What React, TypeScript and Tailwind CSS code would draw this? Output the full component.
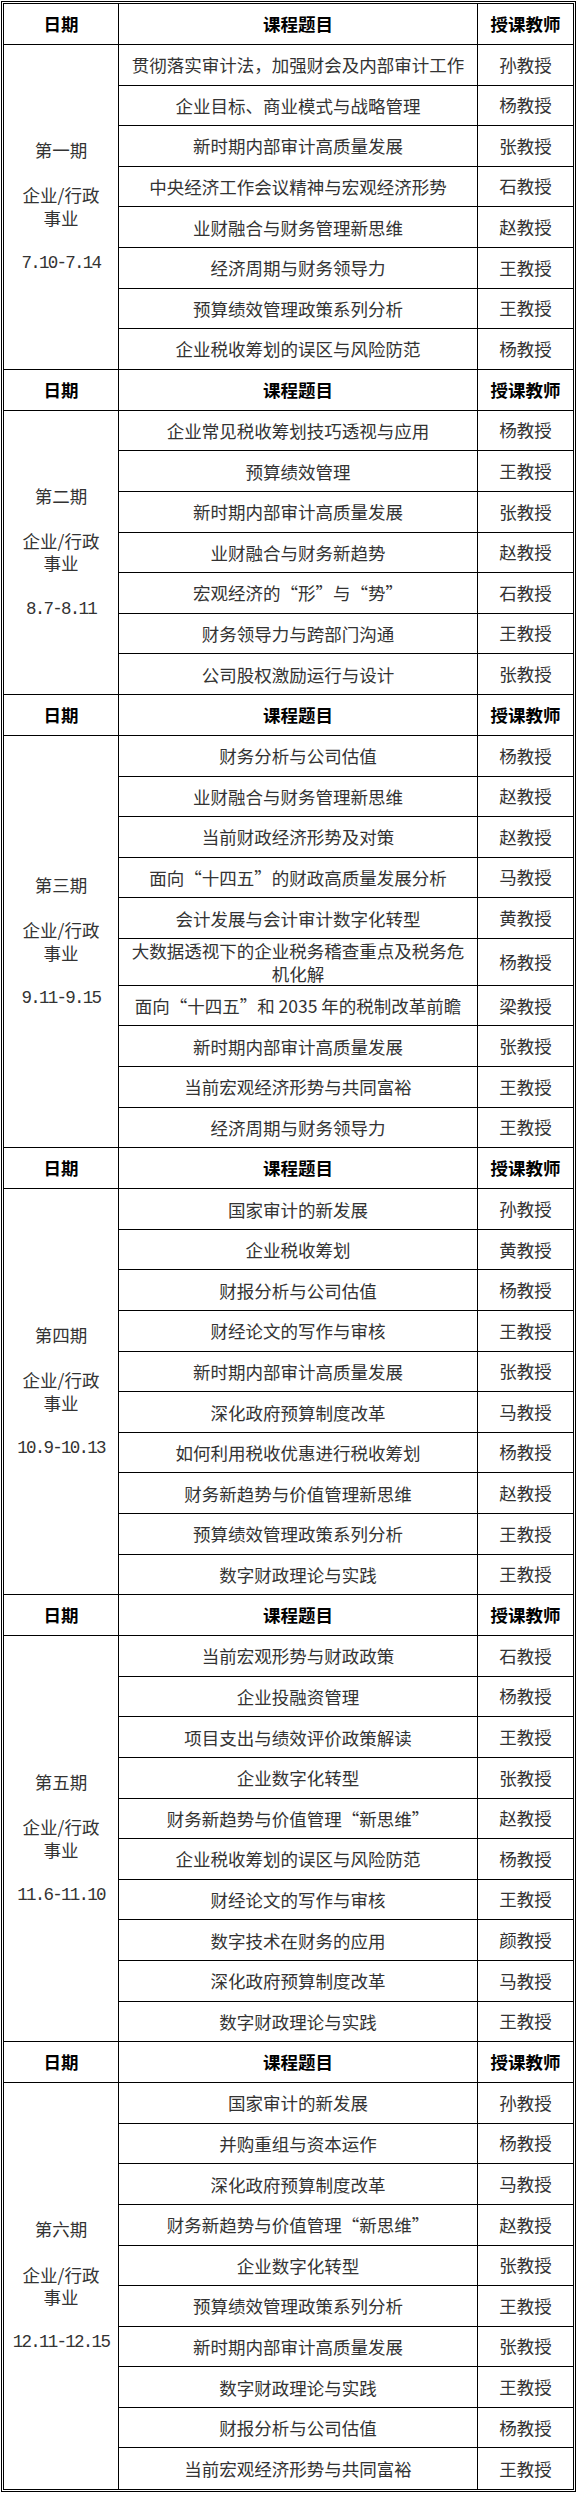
import React from 'react'

type Row = [string, string]

interface Term {
  name: string
  date: string
  rows: Row[]
}

const terms: Term[] = [
  {
    name: '第一期',
    date: '7.10-7.14',
    rows: [
      ['贯彻落实审计法，加强财会及内部审计工作', '孙教授'],
      ['企业目标、商业模式与战略管理', '杨教授'],
      ['新时期内部审计高质量发展', '张教授'],
      ['中央经济工作会议精神与宏观经济形势', '石教授'],
      ['业财融合与财务管理新思维', '赵教授'],
      ['经济周期与财务领导力', '王教授'],
      ['预算绩效管理政策系列分析', '王教授'],
      ['企业税收筹划的误区与风险防范', '杨教授'],
    ],
  },
  {
    name: '第二期',
    date: '8.7-8.11',
    rows: [
      ['企业常见税收筹划技巧透视与应用', '杨教授'],
      ['预算绩效管理', '王教授'],
      ['新时期内部审计高质量发展', '张教授'],
      ['业财融合与财务新趋势', '赵教授'],
      ['宏观经济的“形”与“势”', '石教授'],
      ['财务领导力与跨部门沟通', '王教授'],
      ['公司股权激励运行与设计', '张教授'],
    ],
  },
  {
    name: '第三期',
    date: '9.11-9.15',
    rows: [
      ['财务分析与公司估值', '杨教授'],
      ['业财融合与财务管理新思维', '赵教授'],
      ['当前财政经济形势及对策', '赵教授'],
      ['面向“十四五”的财政高质量发展分析', '马教授'],
      ['会计发展与会计审计数字化转型', '黄教授'],
      ['大数据透视下的企业税务稽查重点及税务危机化解', '杨教授'],
      ['面向“十四五”和 2035 年的税制改革前瞻', '梁教授'],
      ['新时期内部审计高质量发展', '张教授'],
      ['当前宏观经济形势与共同富裕', '王教授'],
      ['经济周期与财务领导力', '王教授'],
    ],
  },
  {
    name: '第四期',
    date: '10.9-10.13',
    rows: [
      ['国家审计的新发展', '孙教授'],
      ['企业税收筹划', '黄教授'],
      ['财报分析与公司估值', '杨教授'],
      ['财经论文的写作与审核', '王教授'],
      ['新时期内部审计高质量发展', '张教授'],
      ['深化政府预算制度改革', '马教授'],
      ['如何利用税收优惠进行税收筹划', '杨教授'],
      ['财务新趋势与价值管理新思维', '赵教授'],
      ['预算绩效管理政策系列分析', '王教授'],
      ['数字财政理论与实践', '王教授'],
    ],
  },
  {
    name: '第五期',
    date: '11.6-11.10',
    rows: [
      ['当前宏观形势与财政政策', '石教授'],
      ['企业投融资管理', '杨教授'],
      ['项目支出与绩效评价政策解读', '王教授'],
      ['企业数字化转型', '张教授'],
      ['财务新趋势与价值管理“新思维”', '赵教授'],
      ['企业税收筹划的误区与风险防范', '杨教授'],
      ['财经论文的写作与审核', '王教授'],
      ['数字技术在财务的应用', '颜教授'],
      ['深化政府预算制度改革', '马教授'],
      ['数字财政理论与实践', '王教授'],
    ],
  },
  {
    name: '第六期',
    date: '12.11-12.15',
    rows: [
      ['国家审计的新发展', '孙教授'],
      ['并购重组与资本运作', '杨教授'],
      ['深化政府预算制度改革', '马教授'],
      ['财务新趋势与价值管理“新思维”', '赵教授'],
      ['企业数字化转型', '张教授'],
      ['预算绩效管理政策系列分析', '王教授'],
      ['新时期内部审计高质量发展', '张教授'],
      ['数字财政理论与实践', '王教授'],
      ['财报分析与公司估值', '杨教授'],
      ['当前宏观经济形势与共同富裕', '王教授'],
    ],
  },
]

function HeaderRow() {
  return (
    <tr className="h-[41px]">
      <th className="w-[115px] border-r border-b border-black text-center font-bold text-black">日期</th>
      <th className="w-[359px] border-r border-b border-black text-center font-bold text-black">课程题目</th>
      <th className="border-b border-black text-center font-bold text-black">授课教师</th>
    </tr>
  )
}

function TermBlock({ term, last }: { term: Term; last: boolean }) {
  return (
    <>
      <HeaderRow />
      {term.rows.map(([title, teacher], i) => {
        const isLast = last && i === term.rows.length - 1
        const rowBorder = isLast ? '' : 'border-b border-black'
        return (
          <tr key={title + i} className="h-[40.6px]">
            {i === 0 && (
              <td
                rowSpan={term.rows.length}
                className={`border-r border-black text-center align-middle text-[#333] ${last ? '' : 'border-b'}`}
              >
                <div className="leading-[22.6px]">
                  <div>{term.name}</div>
                  <div className="h-[22.6px]" />
                  <div>企业/行政</div>
                  <div>事业</div>
                  <div className="h-[22.6px]" />
                  <div className="font-['Liberation_Mono',monospace] tracking-[-1.75px]">{term.date}</div>
                </div>
              </td>
            )}
            <td className={`border-r border-black px-[5px] text-center align-middle leading-[23px] text-[#333] ${rowBorder}`}>
              {title}
            </td>
            <td className={`text-center align-middle text-[#333] ${rowBorder}`}>{teacher}</td>
          </tr>
        )
      })}
    </>
  )
}

export default function App() {
  return (
    <div className="w-[577px] bg-white p-[1px] font-['Noto_Sans_CJK_SC',sans-serif] text-[17.5px]">
      <div className="border-[3px] border-double border-black">
        <table className="w-full table-fixed border-separate border-spacing-0">
          <colgroup>
            <col className="w-[115px]" />
            <col className="w-[359px]" />
            <col />
          </colgroup>
          <tbody>
            {terms.map((term, i) => (
              <TermBlock key={term.name} term={term} last={i === terms.length - 1} />
            ))}
          </tbody>
        </table>
      </div>
    </div>
  )
}
